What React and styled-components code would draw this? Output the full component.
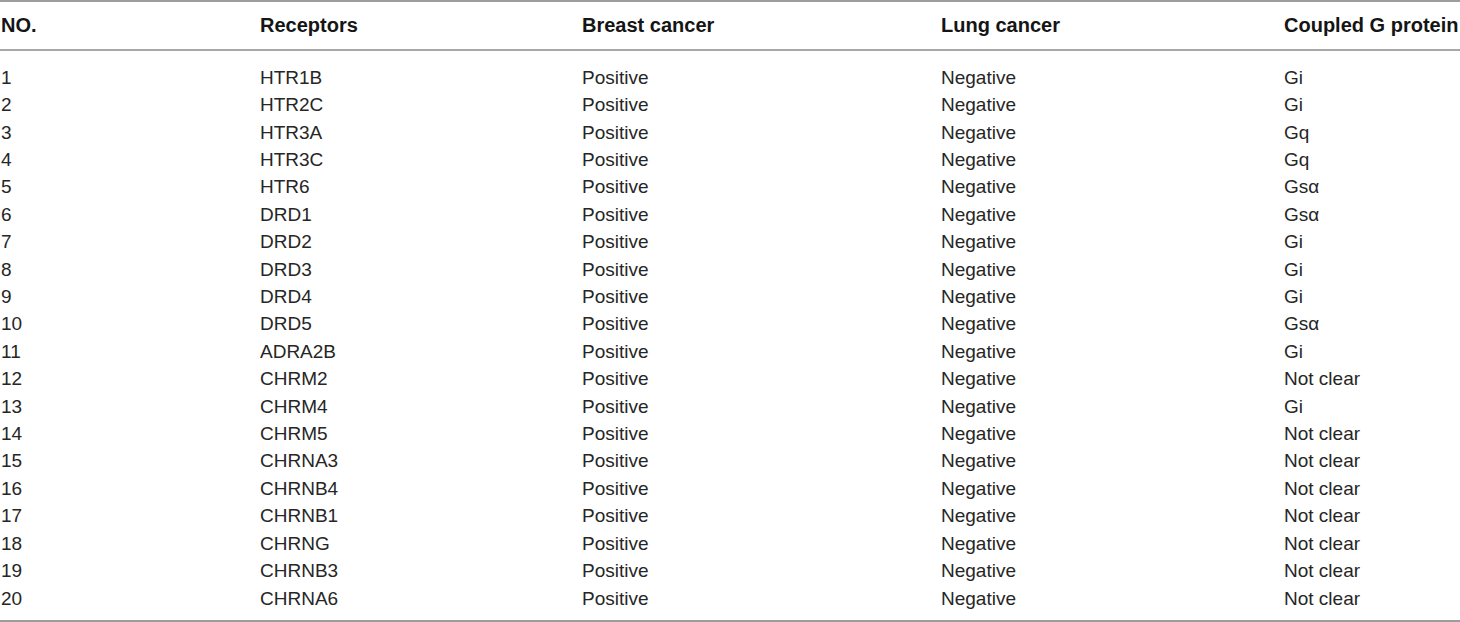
import React from 'react'
import styled, { createGlobalStyle } from 'styled-components'

const GlobalStyle = createGlobalStyle`
  html, body {
    margin: 0;
    padding: 0;
    background: #fff;
  }
  body {
    font-family: "Liberation Sans", Arial, sans-serif;
  }
`

const Table = styled.table`
  width: 1460px;
  table-layout: fixed;
  border-collapse: collapse;
  border-top: 2px solid #9d9d9d;
  border-bottom: 2px solid #9d9d9d;
  font-family: "Liberation Sans", Arial, sans-serif;
`

const HeadCell = styled.th`
  height: 47px;
  padding: 0 0 0 1px;
  text-align: left;
  vertical-align: middle;
  font-size: 20px;
  font-weight: 700;
  color: #151515;
  white-space: nowrap;
  border-bottom: 2px solid #a8a8a8;
`

const Cell = styled.td`
  height: 27.4px;
  padding: ${p => (p.$first ? '12.8px' : '0')} 0 ${p => (p.$last ? '8.2px' : '0')} 1px;
  line-height: 27.4px;
  text-align: left;
  vertical-align: top;
  font-size: 19px;
  color: #262626;
  white-space: nowrap;
`

const columns = [
  { key: 'no', label: 'NO.', width: 259 },
  { key: 'receptor', label: 'Receptors', width: 322 },
  { key: 'breast', label: 'Breast cancer', width: 359 },
  { key: 'lung', label: 'Lung cancer', width: 343 },
  { key: 'protein', label: 'Coupled G protein', width: 177 },
]

const receptors = [
  ['HTR1B', 'Gi'],
  ['HTR2C', 'Gi'],
  ['HTR3A', 'Gq'],
  ['HTR3C', 'Gq'],
  ['HTR6', 'Gsα'],
  ['DRD1', 'Gsα'],
  ['DRD2', 'Gi'],
  ['DRD3', 'Gi'],
  ['DRD4', 'Gi'],
  ['DRD5', 'Gsα'],
  ['ADRA2B', 'Gi'],
  ['CHRM2', 'Not clear'],
  ['CHRM4', 'Gi'],
  ['CHRM5', 'Not clear'],
  ['CHRNA3', 'Not clear'],
  ['CHRNB4', 'Not clear'],
  ['CHRNB1', 'Not clear'],
  ['CHRNG', 'Not clear'],
  ['CHRNB3', 'Not clear'],
  ['CHRNA6', 'Not clear'],
]

const rows = receptors.map(([receptor, protein], i) => ({
  no: String(i + 1),
  receptor,
  breast: 'Positive',
  lung: 'Negative',
  protein,
}))

const App = () => {
  return (
    <>
      <GlobalStyle />
      <Table>
        <colgroup>
          {columns.map(col => (
            <col key={col.key} style={{ width: col.width }} />
          ))}
        </colgroup>
        <thead>
          <tr>
            {columns.map(col => (
              <HeadCell key={col.key}>{col.label}</HeadCell>
            ))}
          </tr>
        </thead>
        <tbody>
          {rows.map((row, index) => (
            <tr key={row.no}>
              {columns.map(col => (
                <Cell
                  key={col.key}
                  $first={index === 0}
                  $last={index === rows.length - 1}
                >
                  {row[col.key]}
                </Cell>
              ))}
            </tr>
          ))}
        </tbody>
      </Table>
    </>
  )
}

export default App
